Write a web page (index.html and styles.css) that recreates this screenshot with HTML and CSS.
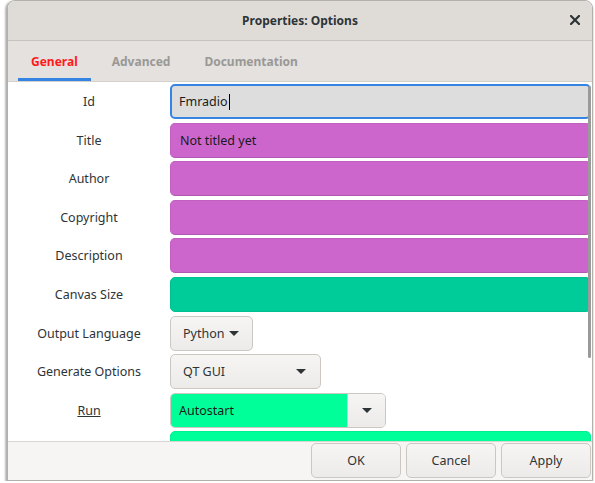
FILE: index.html
```html
<!DOCTYPE html>
<html>
<head>
<meta charset="utf-8">
<link rel="stylesheet" href="styles.css">
</head>
<body>
<div class="window">
  <div class="header">
    <span class="title">Properties: Options</span>
    <svg class="close" width="10" height="10" viewBox="0 0 10 10"><path d="M1 1L9 9M9 1L1 9" stroke="#2e3436" stroke-width="2.2" stroke-linecap="square"/></svg>
  </div>
  <div class="tabs">
    <div class="tab active">General</div>
    <div class="tab">Advanced</div>
    <div class="tab">Documentation</div>
  </div>
  <div class="content">
    <div class="form">
      <div class="label">Id</div>
      <div class="field focus">Fmradio<span class="caret"></span></div>
      <div class="label">Title</div>
      <div class="field magenta">Not titled yet</div>
      <div class="label">Author</div>
      <div class="field magenta"></div>
      <div class="label">Copyright</div>
      <div class="field magenta"></div>
      <div class="label">Description</div>
      <div class="field magenta"></div>
      <div class="label">Canvas Size</div>
      <div class="field teal"></div>
      <div class="label">Output Language</div>
      <div class="cell"><div class="dropbtn py">Python <span class="arrow"></span></div></div>
      <div class="label">Generate Options</div>
      <div class="cell"><div class="dropbtn qt">QT GUI <span class="arrow"></span></div></div>
      <div class="label"><u>Run</u></div>
      <div class="cell"><div class="combo"><div class="combo-entry">Autostart</div><div class="combo-btn"><span class="arrow"></span></div></div></div>
      <div class="label"></div>
      <div class="field mint"></div>
    </div>
    <div class="scrollbar"></div>
  </div>
  <div class="actions">
    <div class="btn">OK</div>
    <div class="btn">Cancel</div>
    <div class="btn">Apply</div>
  </div>
</div>
</body>
</html>
```
FILE: styles.css
```css
* { box-sizing: border-box; }
html, body { margin: 0; padding: 0; background: #ffffff; }
body {
  font-family: "Noto Sans", "DejaVu Sans", sans-serif;
  font-size: 12.5px;
  color: #2e3436;
}
.window {
  margin-left: 7px;
  width: 586px;
  height: 481px;
  border: 1px solid #b3afab;
  border-radius: 8px 8px 0 0;
  box-shadow: -2px 1px 2px rgba(0,0,0,0.25), 0 2px 2px rgba(0,0,0,0.3);
  display: flex;
  flex-direction: column;
  overflow: hidden;
  background: #ffffff;
}
.header {
  height: 40px;
  flex: none;
  background: #dfdcd8;
  border-bottom: 1px solid #c6c2bd;
  display: flex;
  align-items: center;
  justify-content: center;
  position: relative;
}
.title { font-weight: bold; font-size: 12px; color: #2e3436; }
.close { position: absolute; right: 12px; top: 14px; }
.tabs {
  height: 41px;
  flex: none;
  background: #e4e1de;
  border-bottom: 1px solid #d4d0cc;
  display: flex;
  padding-left: 10px;
}
.tab {
  padding: 0 13px;
  margin-right: 8px;
  display: flex;
  align-items: center;
  font-weight: bold;
  font-size: 12px;
  color: #999896;
  border-bottom: 3px solid transparent;
  padding-top: 3px;
}
.tab.active { color: #ff1a1a; border-bottom-color: #3584e4; }
.content {
  flex: 1;
  overflow: hidden;
  position: relative;
  background: #ffffff;
}
.form {
  display: grid;
  grid-template-columns: 162px 1fr;
  grid-auto-rows: 35px;
  row-gap: 3.6px;
  padding: 2px 1px 0 0;
}
.label {
  display: flex;
  align-items: center;
  justify-content: center;
  color: #2e3436;
}
.field {
  border-radius: 5px;
  display: flex;
  align-items: center;
  padding-left: 9px;
  color: #1a1a1a;
}
.focus {
  background: #dddddd;
  border: 2px solid #3584e4;
  padding-left: 7px;
}
.caret { display: inline-block; width: 1px; height: 16px; background: #000; margin-left: 1px; }
.magenta { background: #cc66cc; border: 1px solid #c260c2; border-bottom-color: #b058b0; }
.teal { background: #00cc99; border: 1px solid #00c093; }
.mint { background: #00ff99; border: 1px solid #00f090; }
.cell { display: flex; }
.dropbtn {
  height: 35px;
  border: 1px solid #cdc7c2;
  border-radius: 5px;
  background: linear-gradient(#f6f5f4, #edebe9);
  display: flex;
  align-items: center;
  padding-left: 12px;
  color: #2e3436;
}
.py { width: 83px; gap: 5px; }
.qt { width: 151px; justify-content: space-between; padding-right: 14px; }
.arrow {
  display: inline-block;
  width: 0; height: 0;
  border-left: 5px solid transparent;
  border-right: 5px solid transparent;
  border-top: 5px solid #2e3436;
}
.combo {
  width: 216px;
  height: 35px;
  display: flex;
  border-radius: 5px;
  overflow: hidden;
  border: 1px solid #cdc7c2;
}
.combo-entry {
  flex: 1;
  background: #00ff99;
  display: flex;
  align-items: center;
  padding-left: 8px;
  color: #1a1a1a;
}
.combo-btn {
  width: 38px;
  flex: none;
  background: linear-gradient(#f6f5f4, #edebe9);
  border-left: 1px solid #d6d1cd;
  display: flex;
  align-items: center;
  justify-content: center;
}
.scrollbar {
  position: absolute;
  right: 1px;
  top: 4px;
  width: 3px;
  height: 272px;
  border-radius: 2px;
  background: #9a9a9a;
}
.actions {
  height: 39px;
  flex: none;
  background: #f6f5f4;
  border-top: 1px solid #d8d4d0;
  display: flex;
  justify-content: flex-end;
  gap: 5px;
  padding: 1px 1px 0 0;
}
.btn {
  width: 90px;
  height: 35px;
  border: 1px solid #cdc7c2;
  border-radius: 5px;
  background: linear-gradient(#f6f5f4, #edebe9);
  display: flex;
  align-items: center;
  justify-content: center;
  color: #2e3436;
}
```
